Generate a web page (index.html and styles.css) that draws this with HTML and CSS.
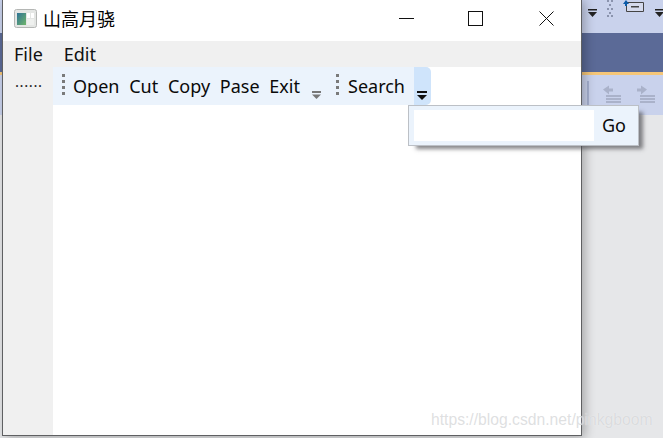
FILE: index.html
```html
<!DOCTYPE html>
<html lang="zh">
<head>
<meta charset="utf-8">
<title>山高月骁</title>
<link rel="stylesheet" href="styles.css">
</head>
<body>
<div class="desktop">
  <div class="bg-top">
    <svg class="bg-icons" width="82" height="33" viewBox="0 0 82 33">
      <g fill="#222"><rect x="7" y="9" width="9" height="1.500"/><path d="M7 12h9l-4.500 5z"/><rect x="74" y="9" width="9" height="1.500"/><path d="M74 12h9l-4.500 5z"/></g>
      <g fill="#8a93ad"><rect x="26" y="0" width="2" height="2"/><rect x="30" y="0" width="2" height="2"/><rect x="28" y="4" width="2" height="2"/><rect x="26" y="8" width="2" height="2"/><rect x="30" y="8" width="2" height="2"/><rect x="28" y="12" width="2" height="2"/><rect x="26" y="15" width="2" height="2"/><rect x="30" y="15" width="2" height="2"/></g>
      <path d="M45.500 2.500h17v9h-17z" fill="#d5daec" stroke="#444"/><rect x="50" y="6" width="8" height="1.500" fill="#444"/><path d="M45 0l-3 4h2v2h2v-2h2z" fill="#0a5aa8"/>
    </svg>
  </div>
  <div class="bg-band"></div>
  <div class="bg-orange"></div>
  <div class="bg-tools">
    <svg width="82" height="40" viewBox="0 0 82 40">
      <rect x="6" y="6" width="2" height="32" fill="#a5b0d0"/>
      <g fill="#aab2ca"><path d="M22 14.500l6-4v3h4v3h-4v3z"/><rect x="25" y="20" width="15" height="2"/><rect x="25" y="23" width="15" height="2"/><rect x="25" y="26" width="15" height="2"/><path d="M66 14.500l-6-4v3h-4v3h4v3z"/><rect x="59" y="20" width="15" height="2"/><rect x="59" y="23" width="15" height="2"/><rect x="59" y="26" width="15" height="2"/></g>
    </svg>
  </div>
  <div class="bg-rest"></div>

  <div class="window">
    <header class="titlebar">
      <svg class="app-icon" width="23" height="19" viewBox="0 0 23 19">
        <rect x=".5" y=".5" width="22" height="18" rx="2" fill="#e4e6e4" stroke="#b4b6b4"/>
        <defs><linearGradient id="g" x1="0" y1="0" x2="1" y2="1"><stop offset="0" stop-color="#2f7396"/><stop offset="1" stop-color="#6fb56a"/></linearGradient></defs>
        <rect x="3" y="4" width="9" height="12" fill="url(#g)"/>
        <rect x="13" y="4" width="3" height="5" fill="#fff"/>
        <rect x="17" y="4" width="3" height="5" fill="#fff"/>
        <rect x="13" y="10" width="7" height="6" fill="#eef0ee"/>
      </svg>
      <span class="title">山高月骁</span>
      <div class="caption">
        <svg class="cap" width="15" height="15" viewBox="0 0 15 15"><rect x="0" y="7" width="15" height="1" fill="#111"/></svg>
        <svg class="cap" width="15" height="15" viewBox="0 0 15 15"><rect x=".5" y=".5" width="14" height="14" fill="none" stroke="#111"/></svg>
        <svg class="cap cap-close" width="15" height="15" viewBox="0 0 15 15"><path d="M.5.500l14 14M14.500.500l-14 14" stroke="#111" fill="none"/></svg>
      </div>
    </header>
    <nav class="menubar"><span>File</span><span>Edit</span></nav>
    <div class="workspace">
      <aside class="dock"><span class="dots">......</span></aside>
      <main class="content">
        <div class="toolbars">
          <div class="toolbar one">
            <i class="grip"></i>
            <span>Open</span><span>Cut</span><span>Copy</span><span>Pase</span><span>Exit</span>
            <svg class="more" width="9" height="9" viewBox="0 0 9 9"><rect y="0" width="9" height="2" fill="#777"/><path d="M0 3.500h9l-4.500 4.500z" fill="#777"/></svg>
          </div>
          <div class="toolbar two">
            <i class="grip"></i>
            <span>Search</span>
            <div class="overflow">
              <svg class="more" width="10" height="10" viewBox="0 0 10 10"><rect y="0" width="10" height="2" fill="#111"/><path d="M0 4h10l-5 5z" fill="#111"/></svg>
            </div>
          </div>
        </div>
      </main>
    </div>
  </div>

  <div class="popup">
    <div class="field"></div>
    <span class="go">Go</span>
  </div>
  <div class="watermark">https://blog.csdn.net/pinkgboom</div>
</div>
</body>
</html>
```
FILE: styles.css
```css
* { box-sizing: border-box; }
html, body { margin: 0; height: 100%; overflow: hidden; }
.desktop {
  position: relative;
  width: 663px;
  height: 438px;
  font-family: "Noto Sans", "Noto Sans CJK SC", sans-serif;
  overflow: hidden;
  background: #e6e7e9;
}
.bg-top { height: 33px; background: #c9d2ec; padding-left: 581px; }
.bg-icons { display: block; }
.bg-band { height: 39px; background: #5b6a97; }
.bg-orange { height: 3px; background: #f5c678; }
.bg-tools { height: 40px; background: #c9d2ec; padding-left: 581px; }
.bg-tools svg { display: block; }
.bg-rest { height: 323px; background: #e6e7e9; }

.window {
  position: absolute;
  left: 2px;
  top: -1px;
  width: 580px;
  height: 437px;
  background: #fff;
  border: 1px solid #5f6062;
  border-top: 0;
  display: flex;
  flex-direction: column;
  box-shadow: 3px 2px 10px rgba(0, 0, 0, .28);
}
.titlebar {
  height: 42px;
  flex: none;
  display: flex;
  align-items: center;
  padding-left: 11px;
  background: #fff;
}
.app-icon { flex: none; margin-top: -4px; }
.title { margin-left: 6px; font-size: 18px; color: #000; margin-top: -4px; font-family: "Noto Sans CJK SC", sans-serif; line-height: 22px; }
.caption { margin-left: auto; display: flex; gap: 54px; padding-right: 27px; margin-top: -3px; }
.cap { display: block; flex: none; }
.cap-close { margin-left: 2px; }
.menubar {
  height: 26px;
  flex: none;
  background: #f0f0f0;
  display: flex;
  align-items: center;
  gap: 21px;
  padding-left: 11px;
  font-size: 18px;
  line-height: 24px;
  color: #111;
}
.workspace { flex: 1; display: flex; min-height: 0; }
.dock { width: 50px; flex: none; background: #f0f0f0; padding: 4px 0 0 12px; }
.dots { display: block; font-size: 15px; line-height: 20px; letter-spacing: .6px; color: #222; white-space: nowrap; }
.content { flex: 1; background: #fff; }
.toolbars { display: flex; align-items: stretch; height: 38px; }
.toolbar {
  display: flex;
  align-items: center;
  background: #ebf3fc;
  font-size: 18px;
  line-height: 24px;
  color: #0a0a0a;
  white-space: nowrap;
}
.toolbar span { display: block; }
.one { gap: 9.750px; padding-left: 9px; width: 274px; }
.one .grip { margin-right: -1.750px; }
.one .more { margin: 18px 6px 0 auto; }
.two { gap: 9px; padding-left: 9px; border-radius: 0 5px 5px 0; width: 103px; }
.grip {
  display: block;
  width: 3px;
  height: 22px;
  flex: none;
  background: repeating-linear-gradient(to bottom, #7a7a7a 0 3px, transparent 3px 6px);
  margin-top: -2px;
}
.overflow {
  margin-left: auto;
  width: 17px;
  height: 38px;
  background: #cfe4fb;
  border-radius: 0 5px 5px 0;
  display: flex;
  justify-content: center;
  align-items: flex-end;
  padding-bottom: 4px;
  flex: none;
}
.more { display: block; flex: none; }

.popup {
  position: absolute;
  left: 408px;
  top: 105px;
  width: 231px;
  height: 41px;
  background: #ebf3fc;
  border: 1px solid #bcc0c6;
  padding: 4px 0 4px 5px;
  display: flex;
  align-items: stretch;
  box-shadow: 6px 5px 4px -2px rgba(70, 70, 75, .65);
}
.field { width: 180px; background: #fff; flex: none; }
.go { font-size: 18px; color: #0a0a0a; margin-left: 8px; line-height: 30px; }
.watermark {
  position: absolute;
  left: 431px;
  top: 410px;
  font-family: "Liberation Sans", Arial, sans-serif;
  font-size: 15.700px;
  line-height: 20px;
  color: rgba(195, 197, 200, .55);
  text-shadow: 0 0 1px rgba(255, 255, 255, .8);
  white-space: nowrap;
}
```
